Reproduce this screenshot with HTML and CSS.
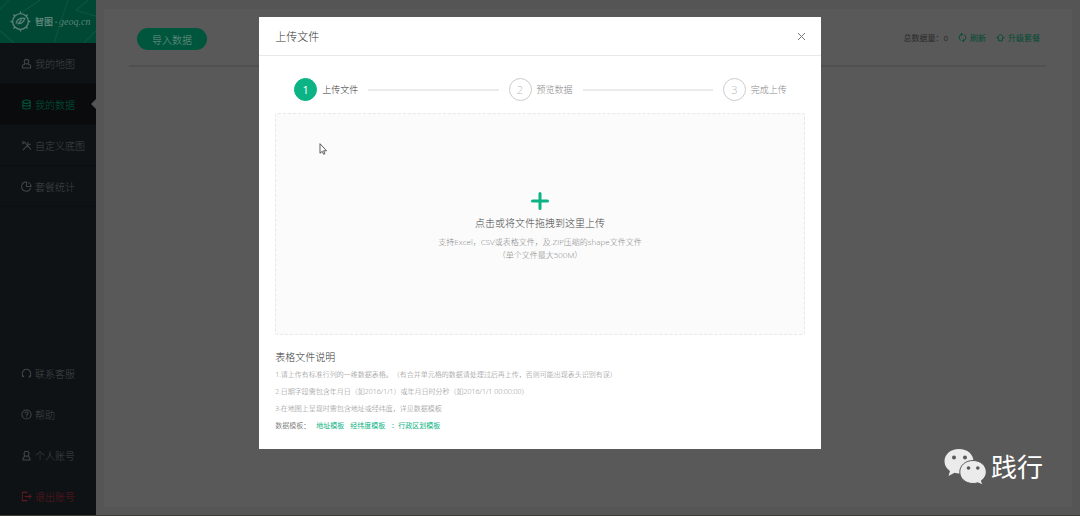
FILE: index.html
```html
<!DOCTYPE html>
<html lang="zh-CN">
<head>
<meta charset="utf-8">
<meta name="viewport" content="width=device-width, initial-scale=1">
<title>上传文件</title>
<link rel="stylesheet" href="styles.css">
</head>
<body>
<div class="app">
  <aside class="sidebar">
    <a class="brand" href="#">
      <svg class="brand-rays" viewBox="0 0 96 42" preserveAspectRatio="none" aria-hidden="true"><path d="M0 9L9 0M68 0L54 42M88 0L76 10L96 16M0 30L14 42M40 0L22 12M96 30L84 42"/></svg>
      <svg class="brand-mark" viewBox="0 0 20 20" aria-hidden="true"><circle cx="10" cy="10" r="7.5"/><path d="M10 .5v2M10 17.500v2M.5 10h2M17.500 10h2M3.300 3.300l1.400 1.400M15.300 15.300l1.400 1.400M16.700 3.300l-1.400 1.400M4.700 15.300l-1.400 1.400M6 12c0-4 4-6 8-5-1 4-3 5-6 5l3-4"/></svg>
      <span class="brand-name">智图</span><span class="brand-dot">·</span><span class="brand-domain">geoq.cn</span>
    </a>
    <nav class="nav">
      <a class="nav-item" href="#"><svg class="icon" viewBox="0 0 12 12"><circle cx="6" cy="4" r="2.500"/><path d="M4.500 6.500L1.500 8v3h9V8L7.500 6.500"/></svg>我的地图</a>
      <a class="nav-item nav-item-active" href="#" aria-current="page"><svg class="icon" viewBox="0 0 12 12"><ellipse cx="6" cy="3" rx="4" ry="1.800"/><path d="M2 3v6c0 2.500 8 2.500 8 0V3M2 6c0 2.300 8 2.300 8 0"/></svg>我的数据</a>
      <a class="nav-item" href="#"><svg class="icon" viewBox="0 0 12 12"><path d="M2 11l6-6M8 5l3-.5M8 5l-.5-3M1 2l3 .5 7 8M1.500 4.500L4 2.500"/></svg>自定义底图</a>
      <a class="nav-item" href="#"><svg class="icon" viewBox="0 0 12 12"><path d="M10.500 7.500A5 5 0 1 1 6 1v5h5A5 5 0 0 0 7.500 1.500"/></svg>套餐统计</a>
    </nav>
    <nav class="nav nav-bottom">
      <a class="nav-item" href="#"><svg class="icon" viewBox="0 0 12 12"><path d="M3 9.500A4.600 4.600 0 1 1 9 9.500M1.500 6v3l2 1M10.500 6v3l-2 1.500"/></svg>联系客服</a>
      <a class="nav-item" href="#"><svg class="icon" viewBox="0 0 12 12"><circle cx="6" cy="6" r="5"/><path d="M4.200 5c0-2.500 3.600-2.300 3.600-.2C7.800 6 6 6 6 7.300M6 8.300v1"/></svg>帮助</a>
      <a class="nav-item" href="#"><svg class="icon" viewBox="0 0 12 12"><circle cx="6" cy="4" r="2.700"/><path d="M4.500 6.500C2.500 7.500 2 9 2 11h8c0-2-.5-3.500-2.500-4.500"/></svg>个人账号</a>
      <a class="nav-item nav-item-danger" href="#"><svg class="icon" viewBox="0 0 12 12"><path d="M7 1.500H1.500v9H7M4 6h7M9 4l2 2-2 2"/></svg>退出账号</a>
    </nav>
  </aside>

  <main class="main">
    <section class="panel">
      <header class="toolbar">
        <button class="import-btn" type="button">导入数据</button>
        <div class="stats">
          <span>总数据量：0</span>
          <a class="stat-link" href="#"><svg class="icon icon-small" viewBox="0 0 12 12"><path d="M4 10A4.500 4.500 0 0 1 5.500 1.500M8 2A4.500 4.500 0 0 1 6.500 10.500M4 0l2 1.500L4.500 3.500M8 12l-2-1.500L7.500 8.500"/></svg>刷新</a>
          <a class="stat-link" href="#"><svg class="icon icon-small" viewBox="0 0 12 12"><path d="M6 1.500L1 6.500h2.500v4h5v-4H11z"/></svg>升级套餐</a>
        </div>
      </header>
    </section>
  </main>
</div>

<div class="overlay">
  <section class="dialog" role="dialog" aria-modal="true" aria-labelledby="dialog-title">
    <header class="dialog-header">
      <h1 class="dialog-title" id="dialog-title">上传文件</h1>
      <button class="close" type="button" aria-label="关闭"><svg viewBox="0 0 9 9" aria-hidden="true"><path d="M1 1l7 7M8 1L1 8"/></svg></button>
    </header>
    <div class="dialog-body">
      <ol class="steps">
        <li class="step step-active"><span class="step-num">1</span>上传文件</li>
        <li class="step-line" aria-hidden="true"></li>
        <li class="step"><span class="step-num">2</span>预览数据</li>
        <li class="step-line" aria-hidden="true"></li>
        <li class="step"><span class="step-num">3</span>完成上传</li>
      </ol>
      <button class="dropzone" type="button">
        <svg class="plus" viewBox="0 0 18 18" aria-hidden="true"><path d="M9 1.500v15M1.500 9h15"/></svg>
        <span class="drop-title">点击或将文件拖拽到这里上传</span>
        <span class="drop-hint">支持Excel，CSV或表格文件，及.ZIP压缩的shape文件文件<br>（单个文件最大500M）</span>
      </button>
      <section class="notes">
        <h2 class="notes-title">表格文件说明</h2>
        <p>1.请上传有标准行列的一维数据表格。（有合并单元格的数据请处理过后再上传，否则可能出现表头识别有误）</p>
        <p>2.日期字段需包含年月日（如2016/1/1）或年月日时分秒（如2016/1/1 00:00:00）</p>
        <p>3.在地图上呈现时需包含地址或经纬度，详见数据模板</p>
        <p class="templates"><span>数据模板：</span><a href="#">地址模板</a><a href="#">经纬度模板</a><a href="#">：行政区划模板</a></p>
      </section>
    </div>
  </section>
</div>

<svg class="cursor" viewBox="0 0 8 12" aria-hidden="true"><path d="M1 .7v9.600l2.200-2 1.400 3 1.300-.6-1.300-2.900h2.900z"/></svg>

<div class="watermark">
  <svg class="chat" viewBox="0 0 43 36" aria-hidden="true">
    <path class="bubble" d="M15 0C6.500 0 .5 5.500.5 12.300c0 4 2 7.400 5.500 9.700l-1.500 5 6-3.200c8.500 2.500 19-2.500 19-11.500C29.500 5.500 23.500 0 15 0z"/>
    <circle class="eye" cx="10" cy="8.500" r="2"/><circle class="eye" cx="21" cy="8.500" r="2"/>
    <path class="bubble bubble-front" d="M29 11.500c-7.500 0-13.200 5-13.200 11.500S21.500 34.500 29 34.500c1.700 0 3.300-.2 4.800-.7l5 2.200-1.400-4.300c3-2.200 4.900-5 4.900-8.700 0-6.500-5.800-11.500-13.300-11.500z"/>
    <circle class="eye" cx="24.500" cy="19" r="1.800"/><circle class="eye" cx="33.800" cy="19" r="1.800"/>
  </svg>
  <span>践行</span>
</div>
</body>
</html>
```
FILE: styles.css
```css
* { box-sizing: border-box; }

body {
  margin: 0;
  background: #555;
  color: #555;
  font-family: "Open Sans", "Noto Sans CJK SC", sans-serif;
  font-size: 9px;
  font-weight: 300;
  text-spacing-trim: space-all;
}

a { color: inherit; text-decoration: none; }
button { font: inherit; cursor: pointer; }
h1, h2, p, ol { margin: 0; padding: 0; font-weight: 300; }

.app {
  display: flex;
  min-height: 100vh;
  border-bottom: 1px solid #3d3b35;
}

.icon {
  flex: none;
  width: 11px;
  height: 11px;
  fill: none;
  stroke: currentColor;
  stroke-width: 1.1;
}
.icon-small { width: 9px; height: 9px; stroke-width: 1.3; }

/* Sidebar */
.sidebar {
  display: flex;
  flex-direction: column;
  flex: none;
  width: 96px;
  background: #0f1214;
}
.brand {
  display: flex;
  position: relative;
  align-items: center;
  height: 43px;
  padding-left: 10px;
  background: #004834;
  color: #5b8377;
  font-size: 9px;
}
.brand-rays {
  position: absolute;
  inset: 0;
  width: 100%;
  height: 100%;
  fill: none;
  stroke: #0b5741;
}
.brand-mark {
  width: 21px;
  height: 21px;
  margin-right: 4px;
  fill: none;
  stroke: #5b8377;
  stroke-width: 1.3;
}
.brand-name { font-weight: 700; }
.brand-dot { width: 6px; text-align: center; font-weight: 700; }
.brand-domain {
  font-family: "Liberation Serif", serif;
  font-size: 10px;
  font-style: italic;
  font-weight: 400;
}
.nav-bottom { margin-top: auto; }
.nav-item {
  display: flex;
  position: relative;
  align-items: center;
  gap: 3px;
  height: 41px;
  padding-left: 21px;
  border-bottom: 1px solid #0c0e10;
  color: #3f464a;
  font-size: 10px;
}
.nav-item-active { background: #090b0c; color: #00573d; }
.nav-item-active::after {
  content: "";
  position: absolute;
  right: 0;
  border: 5px solid transparent;
  border-left-width: 0;
  border-right-color: #555;
}
.nav-bottom .nav-item { padding-top: 4px; border-bottom: 0; }
.nav-bottom .nav-item-danger { color: #5f1720; }

/* Page behind the dialog */
.main { display: flex; flex: 1; padding: 9px 8px 8px; }
.panel { flex: 1; padding: 0 26px 0 25px; background: #595959; }
.toolbar {
  display: flex;
  align-items: center;
  justify-content: space-between;
  height: 58px;
  padding: 4px 6px 0 8px;
  border-bottom: 2px solid #505050;
}
.import-btn {
  height: 22px;
  padding: 0 15px;
  border: 0;
  border-radius: 11px;
  background: #00563d;
  color: #729487;
  font-size: 10px;
}
.stats { display: flex; align-items: center; gap: 10px; margin-top: -4px; color: #292929; font-size: 8px; font-weight: 400; }
.stat-link { display: flex; align-items: center; gap: 3px; color: #004c34; }

/* Dialog */
.overlay {
  display: flex;
  position: absolute;
  inset: 0;
  align-items: flex-start;
  justify-content: center;
  padding-top: 17px;
}
.dialog { width: 52%; min-width: 540px; background: #fff; }
.dialog-header {
  display: flex;
  align-items: center;
  justify-content: space-between;
  height: 39px;
  padding: 0 15px 0 16px;
  border-bottom: 1px solid #e8e8e8;
}
.dialog-title { color: #333; font-size: 11px; }
.close { display: flex; padding: 0; border: 0; background: none; }
.close svg { width: 9px; height: 9px; fill: none; stroke: #777; }
.dialog-body { padding: 22px 16px 15px; }

.steps {
  display: flex;
  align-items: center;
  padding: 0 18px 0 19px;
  list-style: none;
}
.step { display: flex; align-items: center; gap: 5px; color: #888; }
.step-num {
  display: flex;
  align-items: center;
  justify-content: center;
  width: 23px;
  height: 23px;
  border: 1px solid #ccc;
  border-radius: 50%;
  color: #bbb;
  font-size: 11px;
}
.step-active { color: #333; }
.step-active .step-num { border-color: #0cb384; background: #0cb384; color: #fff; font-weight: 400; }
.step-line { flex: 1; height: 2px; margin: 0 10px; background: #ebebeb; }

.dropzone {
  display: flex;
  flex-direction: column;
  align-items: center;
  width: 100%;
  height: 222px;
  margin-top: 12px;
  padding: 78px 0 0;
  border: 1px dashed #e8e8e8;
  border-radius: 3px;
  background: #fbfbfb;
}
.plus { width: 18px; height: 18px; fill: none; stroke: #0cb384; stroke-width: 3; stroke-linecap: round; }
.drop-title { margin-top: 5px; color: #444; font-size: 10px; line-height: 16px; }
.drop-hint { margin-top: 4px; color: #888; font-size: 8px; line-height: 13px; }

.notes { margin-top: 14px; color: #888; font-size: 7px; line-height: 17px; }
.notes-title { color: #333; font-size: 10px; line-height: 17px; }
.templates { display: flex; gap: 6px; color: #444; }
.templates a { color: #0cb384; font-weight: 400; }

.cursor {
  position: absolute;
  top: 143px;
  left: 319px;
  width: 8px;
  height: 12px;
  fill: #fff;
  stroke: #333;
  stroke-width: .8;
}

.watermark {
  display: flex;
  position: absolute;
  right: 37px;
  bottom: 30px;
  align-items: center;
  gap: 4px;
  color: #fff;
  font-size: 26px;
  font-weight: 400;
  line-height: 38px;
}
.chat { width: 43px; height: 36px; }
.bubble { fill: #ebebeb; }
.bubble-front { stroke: #595959; stroke-width: 1; }
.eye { fill: #595959; }
```
